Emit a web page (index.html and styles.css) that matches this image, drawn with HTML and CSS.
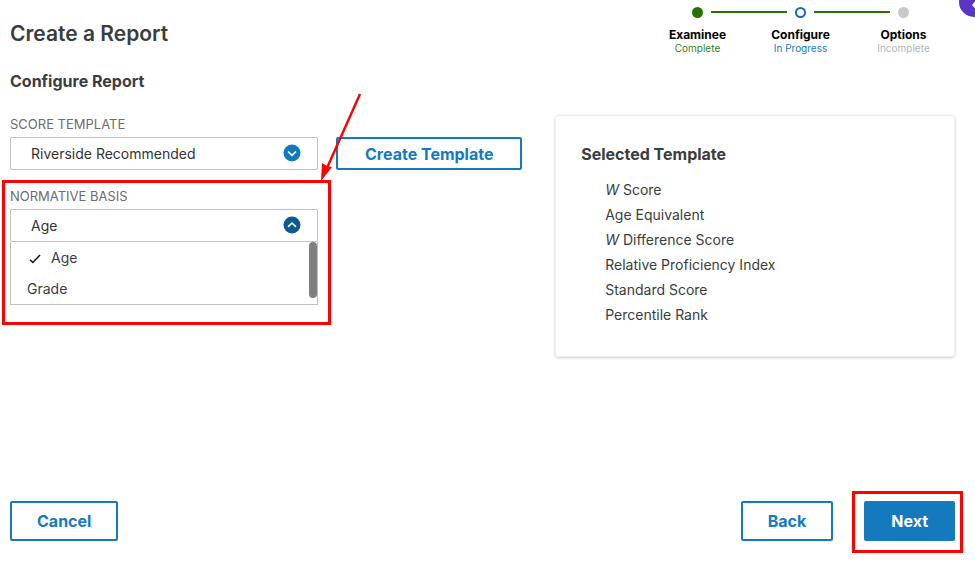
FILE: index.html
```html
<!DOCTYPE html>
<html lang="en">
<head>
  <meta charset="UTF-8">
  <meta name="viewport" content="width=device-width, initial-scale=1">
  <title>Create a Report</title>
  <link rel="stylesheet" href="styles.css">
</head>
<body>
  <div class="page">
    <header class="header">
      <h1>Create a Report</h1>
      <ol class="steps">
        <li class="step complete">
          <span class="dot"></span>
          <strong>Examinee</strong>
          <span class="status">Complete</span>
        </li>
        <li class="step current">
          <span class="dot"></span>
          <strong>Configure</strong>
          <span class="status">In Progress</span>
        </li>
        <li class="step incomplete">
          <span class="dot"></span>
          <strong>Options</strong>
          <span class="status">Incomplete</span>
        </li>
      </ol>
      <button class="drawer-toggle" type="button" aria-label="Open panel">
        <svg width="30" height="30" viewBox="0 0 30 30">
          <path d="M20 12l-5 6 5 6" fill="none" stroke="#fff" stroke-width="3"/>
        </svg>
      </button>
    </header>

    <main class="content">
      <form class="config">
        <h2>Configure Report</h2>

        <div class="field">
          <label for="template">SCORE TEMPLATE</label>
          <div class="field-row">
            <div class="select-wrap">
              <select id="template">
                <option>Riverside Recommended</option>
              </select>
              <svg class="chevron" viewBox="0 0 18 18">
                <circle cx="9" cy="9" r="8.5" fill="#147abd"/>
                <path d="M5 7.5l4 3.8 4-3.8" fill="none" stroke="#fff" stroke-width="1.6"/>
              </svg>
            </div>
            <button class="btn btn-small" type="button">Create Template</button>
          </div>
        </div>

        <div class="field highlight">
          <label for="basis">NORMATIVE BASIS</label>
          <div class="select-wrap">
            <select id="basis">
              <option>Age</option>
              <option>Grade</option>
            </select>
            <svg class="chevron" viewBox="0 0 18 18">
              <circle cx="9" cy="9" r="8.5" fill="#0f5a8c"/>
              <path d="M5 10.8L9 7l4 3.8" fill="none" stroke="#fff" stroke-width="1.6"/>
            </svg>
          </div>
          <ul class="options" role="listbox" aria-label="Normative basis">
            <li role="option" aria-selected="true">
              <svg class="check" viewBox="0 0 12 12">
                <path d="M1 7.8l2.8 2.7L11 3" fill="none" stroke="#111" stroke-width="1.5"/>
              </svg>
              Age
            </li>
            <li role="option" aria-selected="false">Grade</li>
          </ul>
          <svg class="arrow" viewBox="0 0 44 90">
            <path d="M40 1L7 75" fill="none" stroke="#f00" stroke-width="2.4"/>
            <path d="M1 88l1-18 5 3 5 1z" fill="#f00"/>
          </svg>
        </div>
      </form>

      <section class="card">
        <h3>Selected Template</h3>
        <ul>
          <li><em>W</em> Score</li>
          <li>Age Equivalent</li>
          <li><em>W</em> Difference Score</li>
          <li>Relative Proficiency Index</li>
          <li>Standard Score</li>
          <li>Percentile Rank</li>
        </ul>
      </section>
    </main>

    <footer class="footer">
      <button class="btn cancel" type="button">Cancel</button>
      <button class="btn" type="button">Back</button>
      <button class="btn btn-primary highlight" type="button">Next</button>
    </footer>
  </div>
</body>
</html>
```
FILE: styles.css
```css
* {
  box-sizing: border-box;
}
body {
  margin: 0;
  font-family: Inter, "Liberation Sans", sans-serif;
  font-size: 14px;
  color: #3a3d3d;
  background: #fff;
}
h1, h2, h3, ul, ol {
  margin: 0;
  padding: 0;
}
ul, ol {
  list-style: none;
}
.page {
  display: flex;
  flex-direction: column;
  min-height: 100vh;
  padding: 0 20px 22px 10px;
  position: relative;
  overflow: hidden;
}

/* header and progress steps */
.header {
  display: flex;
  justify-content: space-between;
}
h1 {
  padding-top: 21px;
  font-size: 21px;
  line-height: 26px;
  font-weight: 600;
}
.steps {
  display: flex;
  padding-top: 7px;
}
.step {
  display: flex;
  flex-direction: column;
  align-items: center;
  width: 103px;
  position: relative;
  font-size: 10px;
  line-height: 12px;
}
.step strong {
  margin-top: 9px;
  font-size: 12px;
  line-height: 15px;
  font-weight: 700;
  color: #000;
}
.dot {
  width: 11px;
  height: 11px;
  border-radius: 50%;
  background: #c8c8c8;
}
.complete .dot {
  background: #267300;
}
.current .dot {
  background: #fff;
  border: 2px solid #0f6cae;
}
.step + .step::before {
  content: "";
  position: absolute;
  top: 4px;
  left: -38px;
  width: 76px;
  height: 2px;
  background: #267300;
}
.complete .status {
  color: #358015;
}
.current .status {
  color: #147abd;
}
.incomplete .status {
  color: #b4b4b4;
}
.drawer-toggle {
  position: absolute;
  top: -13px;
  right: -14px;
  width: 30px;
  height: 30px;
  padding: 0;
  border: none;
  border-radius: 50%;
  background: #5b35c5;
}

/* form */
.content {
  display: grid;
  grid-template-columns: 15fr 11fr;
  align-items: start;
}
h2 {
  margin-top: 16px;
  font-size: 16px;
  line-height: 22px;
  font-weight: 700;
}
.field {
  margin-top: 24px;
}
.field + .field {
  margin-top: 18px;
}
.field label {
  display: block;
  margin-bottom: 5px;
  font-size: 13px;
  line-height: 16px;
  color: #6a6d6d;
}
.field-row {
  display: flex;
  gap: 18px;
}
.select-wrap {
  position: relative;
  width: 308px;
}
select {
  display: block;
  width: 100%;
  height: 33px;
  padding: 0 40px 0 20px;
  border: 1px solid #bfbfbf;
  border-radius: 2px;
  background: #fff;
  color: #333;
  font: inherit;
  appearance: none;
}
.chevron {
  position: absolute;
  top: 7px;
  right: 17px;
  width: 18px;
  height: 18px;
  pointer-events: none;
}
.options {
  position: relative;
  width: 308px;
  border: 1px solid #bfbfbf;
  border-top: none;
}
.options li {
  display: flex;
  align-items: center;
  gap: 10px;
  height: 31px;
  padding-left: 16px;
}
/* scroll thumb of the open list */
.options::after {
  content: "";
  position: absolute;
  top: 0;
  right: 0;
  width: 8px;
  height: 56px;
  border-radius: 4px;
  background: #808080;
}
.check {
  width: 12px;
  height: 12px;
  margin-left: 2px;
}

/* red callouts */
.highlight {
  position: relative;
}
.highlight::after {
  content: "";
  position: absolute;
  border: 3px solid #f00;
  pointer-events: none;
}
.field.highlight {
  width: 308px;
}
.field.highlight::after {
  top: -8px;
  right: -13px;
  bottom: -20px;
  left: -8px;
}
.btn.highlight::after {
  top: -12px;
  right: -10px;
  bottom: -14px;
  left: -14px;
}
.arrow {
  position: absolute;
  top: -95px;
  left: 310px;
  width: 44px;
  height: 90px;
  pointer-events: none;
  z-index: 1;
}

/* template summary */
.card {
  margin-top: 61px;
  padding: 27px 25px 29px;
  border: 1px solid #eee;
  border-radius: 4px;
  box-shadow: 0 1px 3px rgba(0, 0, 0, 0.2);
}
.card h3 {
  margin-bottom: 12px;
  font-size: 16px;
  line-height: 22px;
  font-weight: 700;
}
.card li {
  padding-left: 24px;
  line-height: 25px;
}

/* buttons */
.btn {
  height: 40px;
  padding: 0 25px;
  border: 2px solid #147abd;
  border-radius: 2px;
  background: #fff;
  color: #147abd;
  font-family: inherit;
  font-size: 16px;
  font-weight: 700;
  cursor: pointer;
}
.btn-small {
  height: 33px;
  padding: 0 27px;
}
.btn-primary {
  background: #147abd;
  color: #fff;
}
.footer {
  display: flex;
  gap: 31px;
  margin-top: auto;
}
.cancel {
  margin-right: auto;
}
```
